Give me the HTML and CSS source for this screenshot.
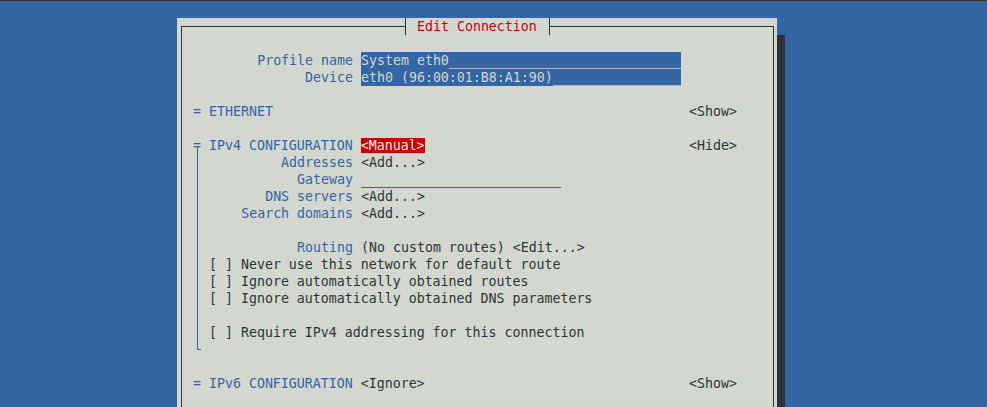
FILE: index.html
```html
<!DOCTYPE html>
<html lang="en">

<head>
	<meta charset="UTF-8">
	<meta name="viewport" content="width=device-width, initial-scale=1.0">
	<title>Edit Connection</title>
	<link rel="stylesheet" href="styles.css">
</head>

<body>

	<div class="dialog">
		<div class="title"><span class="tee tee-left"></span> Edit Connection <span class="tee tee-right"></span></div>

		<div class="frame">
			<div class="form">
				<div class="row"><span class="label">Profile name</span><span class="entry"><span>System eth0</span><span class="fill"></span></span></div>
				<div class="row"><span class="label">Device</span><span class="entry"><span>eth0 (96:00:01:B8:A1:90)</span><span class="fill"></span></span></div>
				<div class="row"></div>

				<div class="row head"><span class="name">= ETHERNET</span><span class="btn">&lt;Show&gt;</span></div>
				<div class="row"></div>

				<div class="row head"><span class="name">= IPv4 CONFIGURATION <span class="btn active">&lt;Manual&gt;</span></span><span class="btn">&lt;Hide&gt;</span></div>
				<div class="section-body">
					<div class="row"><span class="label">Addresses</span><span class="btn">&lt;Add...&gt;</span></div>
					<div class="row"><span class="label">Gateway</span><span class="line-entry"></span></div>
					<div class="row"><span class="label">DNS servers</span><span class="btn">&lt;Add...&gt;</span></div>
					<div class="row"><span class="label">Search domains</span><span class="btn">&lt;Add...&gt;</span></div>
					<div class="row"></div>
					<div class="row"><span class="label">Routing</span><span class="btn">(No custom routes) &lt;Edit...&gt;</span></div>
					<div class="row check">[ ] Never use this network for default route</div>
					<div class="row check">[ ] Ignore automatically obtained routes</div>
					<div class="row check">[ ] Ignore automatically obtained DNS parameters</div>
					<div class="row"></div>
					<div class="row check">[ ] Require IPv4 addressing for this connection</div>
				</div>
				<div class="row"></div>

				<div class="row head"><span class="name">= IPv6 CONFIGURATION <span class="btn">&lt;Ignore&gt;</span></span><span class="btn">&lt;Show&gt;</span></div>
			</div>
		</div>
	</div>

</body>

</html>
```

FILE: styles.css
```css
*,
*::before,
*::after {
	box-sizing: border-box;
}

html,
body {
	height: 100%;
}

body {
	margin: 0;
	padding: 17px 0 0 177px;
	background-color: #3465a4;
	border-top: 1px solid #2e3436;
	overflow: hidden;
	font-family: "DejaVu Sans Mono", monospace;
	font-size: 13.288px;
	line-height: 17px;
	color: #2e3436;
}

/* one terminal cell = 8px x 17px */

.dialog {
	position: relative;
	width: 600px;
	height: 100%;
	padding-top: 8px;
	background-color: #d3d7cf;
	box-shadow: 8px 17px 0 #2e3436;
}

.title {
	position: absolute;
	top: 0;
	left: 224px;
	display: flex;
	height: 17px;
	white-space: pre;
	color: #cc0000;
	background-color: #d3d7cf;
}

.tee {
	width: 8px;
	height: 17px;
}

.tee-left {
	background:
		linear-gradient(#2e3436, #2e3436) 4px 0 / 1px 100% no-repeat,
		linear-gradient(#2e3436, #2e3436) 0 8px / 5px 1px no-repeat;
}

.tee-right {
	background:
		linear-gradient(#2e3436, #2e3436) 4px 0 / 1px 100% no-repeat,
		linear-gradient(#2e3436, #2e3436) 4px 8px / 4px 1px no-repeat;
}

.frame {
	height: 100%;
	margin: 0 3px 0 4px;
	padding: 25px 0 0 11px;
	border: 1px solid #2e3436;
	border-bottom: none;
}

.form {
	width: 544px;
}

.row {
	display: flex;
	height: 17px;
	white-space: pre;
}

.label {
	width: 160px;
	margin-right: 8px;
	text-align: right;
	color: #3465a4;
}

.entry {
	display: flex;
	width: 320px;
	color: #d3d7cf;
	background-color: #3465a4;
}

.entry .fill {
	flex: 1;
	box-shadow: inset 0 -1px #a9b8cf;
}

.line-entry {
	width: 200px;
	box-shadow: inset 0 -1px #3465a4;
}

.head {
	justify-content: space-between;
}

.head .name {
	color: #3465a4;
}

.btn {
	color: #2e3436;
}

.btn.active {
	color: #eeeeec;
	background-color: #cc0000;
}

.check {
	padding-left: 16px;
}

/* the tree line under an open section, ending in a corner */
.section-body {
	margin-top: -8px;
	padding: 8px 0 17px;
	background:
		linear-gradient(#3465a4, #3465a4) 4px 0 / 1px calc(100% - 8px) no-repeat,
		linear-gradient(#3465a4, #3465a4) 4px calc(100% - 8px) / 4px 1px no-repeat;
}
```
